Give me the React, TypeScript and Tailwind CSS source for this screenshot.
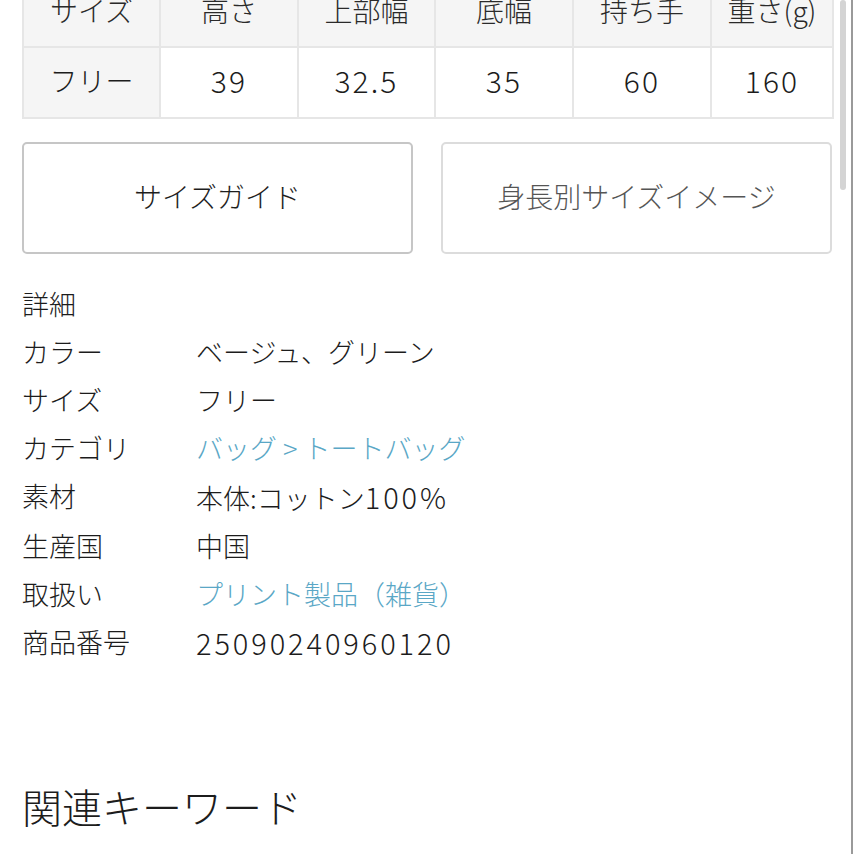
import React from 'react';

const HEADERS = ['サイズ', '高さ', '上部幅', '底幅', '持ち手', '重さ(g)'];
const VALUES = ['フリー', '39', '32.5', '35', '60', '160'];
const COL_WIDTHS = ['w-[137px]', 'w-[138px]', 'w-[137px]', 'w-[138px]', 'w-[138px]', 'w-[122px]'];

type Detail = { label: string; value: React.ReactNode; link?: boolean };

const Num = ({ children }: { children: React.ReactNode }) => (
  <span className="text-[29px] tracking-[0.1em]">{children}</span>
);

const DETAILS: Detail[] = [
  { label: 'カラー', value: 'ベージュ、グリーン' },
  { label: 'サイズ', value: 'フリー' },
  { label: 'カテゴリ', value: 'バッグ > トートバッグ', link: true },
  {
    label: '素材',
    value: (
      <>
        本体:コットン<Num>100%</Num>
      </>
    ),
  },
  { label: '生産国', value: '中国' },
  { label: '取扱い', value: 'プリント製品（雑貨）', link: true },
  { label: '商品番号', value: <Num>25090240960120</Num> },
];

export default function App() {
  return (
    <div
      className="relative h-[854px] w-[854px] overflow-hidden bg-white text-[#1c1c1c]"
      style={{ fontFamily: '"Noto Sans CJK JP", "Noto Sans", sans-serif' }}
    >
      <div className="px-[22px]">
        {/* サイズ表 */}
        <table className="-mt-[25px] w-full table-fixed border-collapse text-[28px] font-light">
          <colgroup>
            {COL_WIDTHS.map((w, i) => (
              <col key={i} className={w} />
            ))}
          </colgroup>
          <tbody>
            <tr className="h-[71px] bg-[#f5f5f5]">
              {HEADERS.map((h) => (
                <td key={h} className="border-2 border-[#e6e6e6] pb-[4px] text-center text-[#2a2a2a]">
                  {h}
                </td>
              ))}
            </tr>
            <tr className="h-[71px]">
              {VALUES.map((v, i) => (
                <td
                  key={i}
                  className={
                    i === 0
                      ? 'border-2 border-[#e6e6e6] bg-[#f5f5f5] pb-[5px] text-center'
                      : 'border-2 border-[#e6e6e6] pb-[5px] text-center text-[30px] tracking-[0.07em]'
                  }
                >
                  {v}
                </td>
              ))}
            </tr>
          </tbody>
        </table>

        {/* ボタン */}
        <div className="mt-[23px] grid grid-cols-2 gap-[28px]">
          <button className="flex h-[112px] items-center justify-center rounded-[5px] border-2 border-[#c6c6c6] pb-[4px] text-[28px] font-light text-[#1e1e1e]">
            サイズガイド
          </button>
          <button className="flex h-[112px] items-center justify-center rounded-[5px] border-2 border-[#dcdcdc] pb-[4px] text-[28px] font-light text-[#555]">
            身長別サイズイメージ
          </button>
        </div>

        {/* 詳細 */}
        <div className="mt-[26px] text-[27px] font-light leading-[48px]">
          <div>詳細</div>
          {DETAILS.map((d) => (
            <div key={d.label} className="flex">
              <div className="w-[174px] shrink-0">{d.label}</div>
              <div className={d.link ? 'text-[#5aa7c6]' : ''}>{d.value}</div>
            </div>
          ))}
        </div>

        <h2 className="mt-[114px] text-[40px] font-light leading-[48px]">関連キーワード</h2>
      </div>

      {/* スクロールバー */}
      <div className="absolute right-[1px] top-0 h-full w-[2px] bg-[#9a9a9a]" />
      <div className="absolute right-[8px] top-0 h-[190px] w-[6px] rounded-full bg-[#d4d4d4]" />
    </div>
  );
}
